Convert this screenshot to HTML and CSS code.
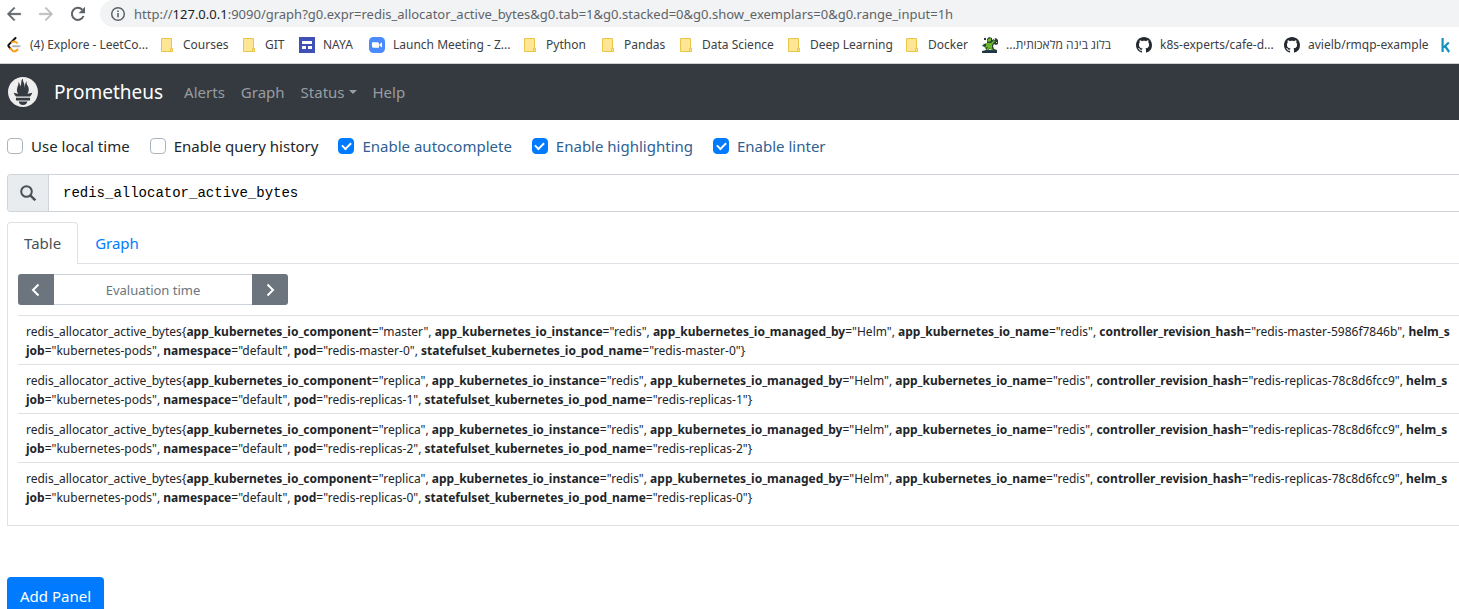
FILE: index.html
```html
<!DOCTYPE html>
<html lang="en">
<head>
<meta charset="utf-8">
<title>Prometheus Time Series Collection and Processing Server</title>
<link rel="stylesheet" href="styles.css">
</head>
<body>
<svg class="defs" aria-hidden="true">
  <symbol id="folder" viewBox="0 0 16 16"><path d="M2.5 1.5h10v10.500h1v2.500h-11z" fill="#ffe694" stroke="#e8c64a"/><path d="M11.500 14.500v-3h2v3z" fill="#ffe694" stroke="#e8c64a"/></symbol>
  <symbol id="github" viewBox="0 0 16 16"><path fill="#24292f" d="M8 0C3.580 0 0 3.580 0 8c0 3.540 2.290 6.530 5.470 7.590.4.070.55-.17.55-.38 0-.19-.01-.82-.01-1.490-2.010.37-2.530-.49-2.690-.94-.09-.23-.48-.94-.82-1.130-.28-.15-.68-.52-.01-.53.63-.01 1.080.58 1.230.82.72 1.210 1.870.87 2.330.66.070-.52.280-.87.510-1.070-1.780-.2-3.640-.89-3.640-3.950 0-.87.310-1.590.82-2.150-.08-.2-.36-1.020.08-2.120 0 0 .67-.21 2.200.82.64-.18 1.320-.27 2-.27s1.360.09 2 .27c1.530-1.040 2.200-.82 2.200-.82.44 1.100.16 1.920.08 2.120.51.56.82 1.270.82 2.150 0 3.070-1.870 3.750-3.650 3.950.29.25.54.73.54 1.480 0 1.070-.01 1.930-.01 2.200 0 .21.15.46.55.38A8.010 8.010 0 0 0 16 8c0-4.420-3.580-8-8-8z"/></symbol>
</svg>

<header class="browser">
  <div class="address-row">
    <button class="tool" aria-label="Back"><svg viewBox="0 0 24 24" fill="#5f6368" stroke="#5f6368"><path d="M22 11H5.800l7.500-7.500L12 2 2 12l10 10 1.300-1.500L5.800 13H22z"/></svg></button>
    <button class="tool" aria-label="Forward"><svg viewBox="0 0 24 24" fill="#babcbe" stroke="#babcbe"><path d="M2 11h16.200l-7.500-7.500L12 2l10 10-10 10-1.300-1.500 7.500-7.500H2z"/></svg></button>
    <button class="tool" aria-label="Reload"><svg viewBox="0 0 16 16"><path d="M13.500 10a6 6 0 1 1-1.200-6.200" fill="none" stroke="#5f6368" stroke-width="2"/><path d="M15 .8v6.400H8.600z" fill="#5f6368"/></svg></button>
    <div class="omnibox">
      <svg class="info" viewBox="0 0 16 16"><circle cx="8" cy="8" r="6.300" fill="none" stroke="#5f6368" stroke-width="1.500"/><path d="M7.200 7h1.600v4.300H7.200zM7.200 4.500h1.600v1.600H7.200z" fill="#5f6368"/></svg>
      <span>http://<b>127.0.0.1</b>:9090/graph?g0.expr=redis_allocator_active_bytes&amp;g0.tab=1&amp;g0.stacked=0&amp;g0.show_exemplars=0&amp;g0.range_input=1h</span>
    </div>
  </div>
  <nav class="bookmarks" aria-label="Bookmarks">
    <a href="#"><svg viewBox="0 0 16 16" fill="none" stroke-linecap="round" stroke-width="2"><path d="M9.500 1 2.800 7.600q-.9 1 0 2L4.500 11.500" stroke="#111"/><path d="M6 5.200q2.500-1.800 5 .7M4.500 11.500l2 2.200q2.500 1.800 5-1.200" stroke="#f9a11b"/><path d="M7 9.200h6.500" stroke="#b3b3b3"/></svg>(4) Explore - LeetCo...</a>
    <a href="#"><svg><use href="#folder"/></svg>Courses</a>
    <a href="#"><svg><use href="#folder"/></svg>GIT</a>
    <a href="#"><svg viewBox="0 0 16 16"><path fill="#3f51b5" d="M0 0h16v16H0z"/><path fill="#fff" d="M3 4h10v3H3zM3 9h4v3H3zM9 9h4v3H9z"/></svg>NAYA</a>
    <a href="#"><svg viewBox="0 0 16 16"><rect width="16" height="16" rx="4.500" fill="#4a8cff"/><path fill="#fff" d="M3 5.200h5.500q1.500 0 1.500 1.500v4H4.500Q3 10.700 3 9.200zM10.500 7.200l2.500-1.900v5.300l-2.500-1.900z"/></svg>Launch Meeting - Z...</a>
    <a href="#"><svg><use href="#folder"/></svg>Python</a>
    <a href="#"><svg><use href="#folder"/></svg>Pandas</a>
    <a href="#"><svg><use href="#folder"/></svg>Data Science</a>
    <a href="#"><svg><use href="#folder"/></svg>Deep Learning</a>
    <a href="#"><svg><use href="#folder"/></svg>Docker</a>
    <a href="#"><svg viewBox="0 0 16 16"><path d="M2 1h2v2H2zM5 2l2-2 3 1v2l2-1 2-1 2 2v4l-2 1-2-1-1 2 1 3 3 1v3H0v-2l4-1-1-3-3-1 2-2 3-1z" fill="#2b3f3a"/><path d="M6 2l3-1v3L7 5 5 4zM4 6h5l3-3 1 1-3 4v3l1 2H9l-1-2-2 2H4l2-3-4 1 2-2z" fill="#69b62d"/><path d="M12 2h1v1h-1zM14 5h1v1h-1zM1 6h2v1H1zM7 12h2v1H7z" fill="#d7e4cc"/><path d="M1 14h14v1.500H1z" fill="#1d3350"/></svg><span dir="rtl">בלוג בינה מלאכותית...</span></a>
    <a href="#"><svg><use href="#github"/></svg>k8s-experts/cafe-d...</a>
    <a href="#"><svg><use href="#github"/></svg>avielb/rmqp-example</a>
    <a href="#" aria-label="Kaggle"><svg viewBox="0 0 16 16" fill="none" stroke="#1591be" stroke-width="2.200"><path d="M4.600 1v14M10.800 5.500 5.500 10.500M7 9l4.200 6"/></svg></a>
  </nav>
</header>

<nav class="navbar">
  <svg class="logo" viewBox="0 0 24 24" fill="#eee"><path d="M12 0C5.373 0 0 5.372 0 12c0 6.627 5.373 12 12 12s12-5.373 12-12c0-6.628-5.373-12-12-12zm0 22.460c-1.885 0-3.414-1.260-3.414-2.814h6.828c0 1.553-1.528 2.813-3.414 2.813zm5.640-3.745H6.360v-2.046h11.280v2.046zm-.04-3.098H6.391c-.037-.043-.075-.086-.111-.13-1.155-1.401-1.427-2.133-1.690-2.879-.005-.025 1.400.287 2.395.511 0 0 .513.119 1.262.255-.72-.843-1.147-1.915-1.147-3.010 0-2.406 1.845-4.508 1.180-6.207.648.053 1.340 1.367 1.387 3.422.689-.951.977-2.690.977-3.755 0-1.103.727-2.385 1.454-2.429-.648 1.069.168 1.984.894 4.256.272.854.237 2.290.447 3.201.070-1.892.395-4.652 1.595-5.605-.529 1.200.079 2.702.494 3.424.671 1.164 1.078 2.047 1.078 3.716a4.642 4.642 0 0 1-1.110 2.996c.792-.149 1.340-.283 1.340-.283l2.573-.502s-.374 1.538-1.810 3.019z"/></svg>
  <a class="brand" href="#">Prometheus</a>
  <a href="#">Alerts</a>
  <a href="#">Graph</a>
  <a class="dropdown" href="#">Status</a>
  <a href="#">Help</a>
</nav>

<main>
  <div class="options">
    <label><input type="checkbox">Use local time</label>
    <label><input type="checkbox">Enable query history</label>
    <label class="on"><input type="checkbox" checked>Enable autocomplete</label>
    <label class="on"><input type="checkbox" checked>Enable highlighting</label>
    <label class="on"><input type="checkbox" checked>Enable linter</label>
  </div>

  <div class="expression">
    <span class="addon"><svg viewBox="0 0 16 16" fill="none" stroke="#495057" stroke-width="2"><circle cx="6.500" cy="6.500" r="5.300"/><path d="m10.300 10.300 5 5" stroke-width="2.400"/></svg></span>
    <input type="text" aria-label="Expression" value="redis_allocator_active_bytes" spellcheck="false">
  </div>

  <div class="tabs">
    <button class="active">Table</button>
    <button>Graph</button>
  </div>

  <section class="pane">
    <div class="time">
      <button aria-label="Decrease time"><svg viewBox="0 0 10 14"><path d="M7.500 1.500 2 7l5.500 5.500"/></svg></button>
      <input type="text" placeholder="Evaluation time" aria-label="Evaluation time">
      <button aria-label="Increase time"><svg viewBox="0 0 10 14"><path d="M2.500 1.500 8 7l-5.500 5.500"/></svg></button>
    </div>
    <table>
      <tbody>
        <tr><td>redis_allocator_active_bytes{<b>app_kubernetes_io_component</b>="master", <b>app_kubernetes_io_instance</b>="redis", <b>app_kubernetes_io_managed_by</b>="Helm", <b>app_kubernetes_io_name</b>="redis", <b>controller_revision_hash</b>="redis-master-5986f7846b", <b>helm_s</b><br><b>job</b>="kubernetes-pods", <b>namespace</b>="default", <b>pod</b>="redis-master-0", <b>statefulset_kubernetes_io_pod_name</b>="redis-master-0"}</td></tr>
        <tr><td>redis_allocator_active_bytes{<b>app_kubernetes_io_component</b>="replica", <b>app_kubernetes_io_instance</b>="redis", <b>app_kubernetes_io_managed_by</b>="Helm", <b>app_kubernetes_io_name</b>="redis", <b>controller_revision_hash</b>="redis-replicas-78c8d6fcc9", <b>helm_s</b><br><b>job</b>="kubernetes-pods", <b>namespace</b>="default", <b>pod</b>="redis-replicas-1", <b>statefulset_kubernetes_io_pod_name</b>="redis-replicas-1"}</td></tr>
        <tr><td>redis_allocator_active_bytes{<b>app_kubernetes_io_component</b>="replica", <b>app_kubernetes_io_instance</b>="redis", <b>app_kubernetes_io_managed_by</b>="Helm", <b>app_kubernetes_io_name</b>="redis", <b>controller_revision_hash</b>="redis-replicas-78c8d6fcc9", <b>helm_s</b><br><b>job</b>="kubernetes-pods", <b>namespace</b>="default", <b>pod</b>="redis-replicas-2", <b>statefulset_kubernetes_io_pod_name</b>="redis-replicas-2"}</td></tr>
        <tr><td>redis_allocator_active_bytes{<b>app_kubernetes_io_component</b>="replica", <b>app_kubernetes_io_instance</b>="redis", <b>app_kubernetes_io_managed_by</b>="Helm", <b>app_kubernetes_io_name</b>="redis", <b>controller_revision_hash</b>="redis-replicas-78c8d6fcc9", <b>helm_s</b><br><b>job</b>="kubernetes-pods", <b>namespace</b>="default", <b>pod</b>="redis-replicas-0", <b>statefulset_kubernetes_io_pod_name</b>="redis-replicas-0"}</td></tr>
      </tbody>
    </table>
  </section>

  <button class="primary">Add Panel</button>
</main>
</body>
</html>
```

FILE: styles.css
```css
* { box-sizing: border-box; }
body {
  margin: 0;
  overflow: hidden;
  background: #fff;
  color: #212529;
  font: 15px/24px "Noto Sans", "Open Sans", sans-serif;
}
a { text-decoration: none; }
button, input { font: inherit; margin: 0; }
.defs { display: none; }

/* Browser toolbar */
.browser { border-bottom: 1px solid #cfd1d3; }
.address-row { display: flex; height: 27px; padding-left: 6px; }
.tool {
  width: 32px;
  padding: 0;
  border: 0;
  background: none;
  display: flex;
  align-items: center;
}
.tool svg { width: 16px; height: 16px; }
.omnibox {
  flex: 1;
  margin-left: -2px;
  padding-left: 10px;
  display: flex;
  align-items: center;
  gap: 8px;
  border-radius: 14px 0 0 14px;
  background: #f1f3f4;
  color: #5f6368;
  font-size: 13px;
  white-space: nowrap;
}
.omnibox b { font-weight: 400; color: #202124; }
.info { width: 16px; height: 16px; }
.bookmarks {
  display: grid;
  grid-template-columns: 153px 82px 58px 70px 153px 78px 78px 108px 118px 78px 154px 148px 154px 1fr;
  align-items: center;
  height: 36px;
  padding-left: 6px;
  font-size: 12px;
  white-space: nowrap;
}
.bookmarks a { display: flex; align-items: center; gap: 8px; color: #3c4043; }
.bookmarks svg { width: 16px; height: 16px; flex: none; }

/* Prometheus navigation */
.navbar {
  display: flex;
  align-items: center;
  gap: 16px;
  height: 56px;
  padding-left: 8px;
  background: #343a40;
}
.navbar a { color: #9a9da0; }
.navbar .brand { color: #fff; font-size: 19px; margin-right: 5px; }
.logo { width: 30px; height: 30px; }
.dropdown::after {
  content: "";
  display: inline-block;
  margin-left: 4px;
  vertical-align: 4px;
  border: 4px solid transparent;
  border-top-color: currentColor;
  border-bottom: 0;
}

main { padding: 14px 0 0 7px; }
.options { display: flex; gap: 20px; white-space: nowrap; }
.options label { display: flex; align-items: center; gap: 8px; }
.options .on { color: #2f5f93; }
.options input {
  appearance: none;
  width: 16px;
  height: 16px;
  border: 1px solid #adb5bd;
  border-radius: 4px;
  display: grid;
  place-items: center;
}
.options input:checked { background: #007bff; border-color: #007bff; }
.options input:checked::after {
  content: "";
  width: 7px;
  height: 4px;
  border: solid #fff;
  border-width: 0 0 2px 2px;
  transform: translateY(-1px) rotate(-45deg);
}

.expression {
  display: flex;
  height: 38px;
  margin-top: 16px;
  border: 1px solid #ced4da;
  border-right: 0;
  border-radius: 4px 0 0 4px;
  overflow: hidden;
}
.addon {
  width: 41px;
  display: grid;
  place-items: center;
  background: #e9ecef;
  border-right: 1px solid #ced4da;
}
.addon svg { width: 16px; height: 16px; }
.expression input {
  flex: 1;
  padding: 0 14px;
  border: 0;
  color: #000;
  font: 14px/24px "Liberation Mono", monospace;
}

.tabs { display: flex; margin-top: 10px; border-bottom: 1px solid #dee2e6; }
.tabs button {
  height: 41px;
  padding: 0 17px;
  border: 0;
  background: none;
  color: #007bff;
}
.tabs .active {
  height: 42px;
  margin-bottom: -1px;
  padding: 0 16px 2px;
  border: 1px solid #dee2e6;
  border-bottom: 0;
  border-radius: 4px 4px 0 0;
  background: #fff;
  color: #495057;
}

.pane {
  padding: 10px 0 14px 10px;
  border: solid #dee2e6;
  border-width: 0 0 1px 1px;
  overflow: hidden;
}
.time { display: flex; width: 270px; height: 31px; }
.time button {
  width: 36px;
  padding: 0;
  border: 0;
  border-radius: 3px 0 0 3px;
  background: #6c757d;
  display: grid;
  place-items: center;
}
.time button:last-child { border-radius: 0 3px 3px 0; }
.time svg { width: 10px; height: 14px; fill: none; stroke: #fff; stroke-width: 2; }
.time input {
  flex: 1;
  min-width: 0;
  border: solid #ced4da;
  border-width: 1px 0;
  padding: 0;
  text-align: center;
  font-size: 13px;
}
.time input::placeholder { color: #6c757d; opacity: 1; }

table { width: 100%; margin-top: 10px; border-spacing: 0; }
td {
  padding: 6px 0 4px 8px;
  border-top: 1px solid #dee2e6;
  font-size: 12px;
  line-height: 19px;
  white-space: nowrap;
}

.primary {
  height: 38px;
  margin-top: 51px;
  padding: 0 13px;
  border: 0;
  border-radius: 4px;
  background: #007bff;
  color: #fff;
}
```
